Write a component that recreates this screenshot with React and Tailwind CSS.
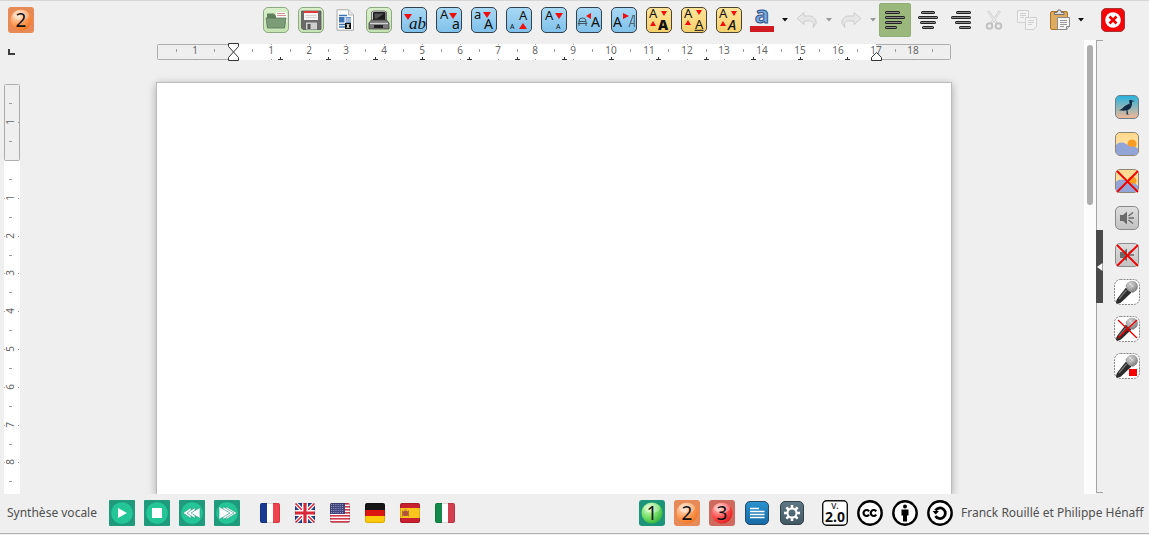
import { useId } from 'react'

const CM = 37.8
const sans = '"Noto Sans", sans-serif'
const serif = '"Liberation Serif", serif'

function IconButton({ label, className = 'size-[26px]', children }) {
  return (
    <button
      type="button"
      title={label}
      aria-label={label}
      className={`flex shrink-0 cursor-pointer items-center justify-center ${className}`}
    >
      {children}
    </button>
  )
}

function Svg({ size = 26, width, height, children }) {
  const w = width || size
  const h = height || size
  return (
    <svg width={w} height={h} viewBox={`0 0 ${w} ${h}`} aria-hidden="true" className="block shrink-0 overflow-visible">
      {children}
    </svg>
  )
}

/* ---------- numbered balls ---------- */

const ballColors = {
  1: { box: '#1b9479', light: '#d9ffc9', mid: '#6fdc62', dark: '#35b142' },
  2: { box: '#e88a58', light: '#ffe3cc', mid: '#ff9a55', dark: '#f0741f' },
  3: { box: '#cf6a5e', light: '#ffc9c9', mid: '#ff4a4a', dark: '#e02020' },
}

function Ball({ n }) {
  const id = useId()
  const c = ballColors[n]
  return (
    <Svg>
      <defs>
        <radialGradient id={id} cx="0.35" cy="0.3" r="0.75">
          <stop offset="0" stopColor={c.light} />
          <stop offset="0.6" stopColor={c.mid} />
          <stop offset="1" stopColor={c.dark} />
        </radialGradient>
      </defs>
      <rect width="26" height="26" rx="3" fill={c.box} />
      <circle cx="13" cy="13" r="10.5" fill={`url(#${id})`} />
      <ellipse cx="13" cy="8" rx="8" ry="5" fill="#fff" opacity="0.3" />
      <text x="13" y="20" textAnchor="middle" fontFamily={sans} fontSize="19" fill="#111">{n}</text>
    </Svg>
  )
}

/* ---------- top toolbar icons ---------- */

function Tile({ from, to, stroke, size = 26, children }) {
  const id = useId()
  return (
    <Svg size={size}>
      <defs>
        <linearGradient id={id} x1="0" y1="0" x2="0" y2="1">
          <stop offset="0" stopColor={from} />
          <stop offset="1" stopColor={to} />
        </linearGradient>
      </defs>
      <rect x="0.5" y="0.5" width={size - 1} height={size - 1} rx="4.5" fill={`url(#${id})`} stroke={stroke} />
      {children}
    </Svg>
  )
}

const Green = ({ children }) => <Tile from="#d9f0cb" to="#c5e3b3" stroke="#8fa884">{children}</Tile>
const Blue = ({ children }) => <Tile from="#a9d9f5" to="#7fc0ea" stroke="#33424c">{children}</Tile>
const Yellow = ({ children }) => <Tile from="#ffe49a" to="#f6d06c" stroke="#4a4433">{children}</Tile>

function Letter({ x, y, size = 13, family = sans, children, ...rest }) {
  return <text x={x} y={y} fontSize={size} fontFamily={family} fill="#111" {...rest}>{children}</text>
}

const Red = ({ points }) => <polygon points={points} fill="#f20d0d" />

function OpenIcon() {
  return (
    <Green>
      <path d="M4 6.5h7l1.5 2H22v11H4z" fill="#5f7f5c" />
      <path d="M13 5h9l2 2v8h-11z" fill="#fff" />
      <path d="M14 6.5h8M14 8.5h9" stroke="#c77a78" strokeWidth="0.8" />
      <path d="M3 11h20l-1.5 10h-17z" fill="#7d9d78" stroke="#567252" strokeWidth="0.8" />
    </Green>
  )
}

function SaveIcon() {
  return (
    <Green>
      <path d="M3.5 4h19.5v18.5H5L3.5 21z" fill="#6b6b6b" stroke="#555" strokeWidth="0.8" />
      <rect x="6" y="4" width="14" height="9" fill="#f4f4f4" />
      <rect x="6" y="4" width="14" height="2" fill="#e03c3c" />
      <path d="M7.5 8.5h11M7.5 10.5h11" stroke="#ccc" strokeWidth="0.8" />
      <rect x="8" y="15.5" width="11" height="7" fill="#cfcfcf" />
      <rect x="9.5" y="17" width="3" height="5" fill="#555" />
    </Green>
  )
}

function ExportIcon() {
  return (
    <Svg width={20} height={22}>
      <path d="M2 0.8h11.5L18.5 6v15.2H2z" fill="#fff" stroke="#a8a8a8" />
      <path d="M13.5 0.8V6h5" fill="#e8e8e8" stroke="#a8a8a8" strokeWidth="0.8" />
      <path d="M4 6.5h8M4 15.5h7M4 18h6" stroke="#3e73b5" strokeWidth="1.4" />
      <rect x="4" y="8" width="5.5" height="5.5" fill="#3e73b5" />
      <path d="M10.5 8.8H16M10.5 11H16M10.5 13.2H16" stroke="#3e73b5" strokeWidth="1.2" />
      <rect x="10" y="14" width="6" height="6" fill="#111" />
      <path d="M11.3 15.3h3.4l-1.3 1.7 1.3 1.7h-3.4l1.3-1.7z" fill="#fff" />
    </Svg>
  )
}

function PrintIcon() {
  return (
    <Green>
      <path d="M5.5 5l2-1h11l2 1v10h-15z" fill="#d8d8d8" stroke="#555" strokeWidth="0.8" />
      <rect x="7" y="5" width="12.5" height="9" rx="1" fill="#1d1d1d" />
      <path d="M8.500 6.500h9.500l-7 5h-2.500z" fill="#555" />
      <path d="M3 16l2.5-3h15l2.5 3v6H3z" fill="#7a7a7a" stroke="#444" strokeWidth="0.8" />
      <path d="M4 16.5h18" stroke="#d2d2d2" strokeWidth="1.3" />
      <rect x="8" y="18" width="9" height="3" fill="#222" />
    </Green>
  )
}

const styleButtons = [
  {
    label: 'Écriture cursive',
    icon: (
      <Blue>
        <Red points="3,7 11,7 7,13" />
        <Letter x="8" y="22" size="17" family={serif} fontStyle="italic">ab</Letter>
      </Blue>
    ),
  },
  {
    label: 'Minuscules',
    icon: (
      <Blue>
        <Letter x="4" y="12">A</Letter>
        <Red points="13,6 21,6 17,12" />
        <Letter x="16" y="22" size="14">a</Letter>
      </Blue>
    ),
  },
  {
    label: 'Majuscules',
    icon: (
      <Blue>
        <Letter x="3" y="12">a</Letter>
        <Red points="12,5 20,5 16,11" />
        <Letter x="13" y="22" size="14">A</Letter>
      </Blue>
    ),
  },
  {
    label: 'Agrandir',
    icon: (
      <Blue>
        <Letter x="13" y="13">A</Letter>
        <Letter x="4" y="22" size="7">A</Letter>
        <Red points="13,22 21,22 17,16" />
      </Blue>
    ),
  },
  {
    label: 'Réduire',
    icon: (
      <Blue>
        <Letter x="4" y="13">A</Letter>
        <Red points="14,6 22,6 18,12" />
        <Letter x="15" y="22" size="7">A</Letter>
      </Blue>
    ),
  },
  {
    label: 'Police suivante',
    icon: (
      <Blue>
        <path d="M3 19v-5q0-3 3.5-3t3.5 3v5M3 14.5h7M1.8 16.5h9.5" fill="none" stroke="#3d5563" />
        <Red points="10,9 15,6 15,12" />
        <Letter x="15" y="20" size="14">A</Letter>
      </Blue>
    ),
  },
  {
    label: 'Italique',
    icon: (
      <Blue>
        <Letter x="2" y="20" size="14">A</Letter>
        <Red points="18,9 12,6 12,12" />
        <path d="M18 20l4-11.5h1.3V20M19.2 16.5h4" fill="none" stroke="#4a6474" strokeWidth="1.1" />
      </Blue>
    ),
  },
  {
    label: 'Gras',
    icon: (
      <Yellow>
        <Letter x="3" y="11">A</Letter>
        <Red points="15,4 21,4 18,9" />
        <Red points="4,19 10,19 7,14" />
        <Letter x="12" y="23" size="14" fontWeight="900">A</Letter>
      </Yellow>
    ),
  },
  {
    label: 'Souligné',
    icon: (
      <Yellow>
        <Letter x="3" y="11">A</Letter>
        <Red points="15,3 21,3 18,8" />
        <Red points="4,18 10,18 7,13" />
        <Letter x="14" y="22">A</Letter>
        <path d="M13.5 23.3h9" stroke="#111" />
      </Yellow>
    ),
  },
  {
    label: 'Penché',
    icon: (
      <Yellow>
        <Letter x="3" y="11">A</Letter>
        <Red points="15,4 21,4 18,9" />
        <Red points="4,19 10,19 7,14" />
        <Letter x="12" y="23" size="14" fontStyle="italic" fontWeight="500">A</Letter>
      </Yellow>
    ),
  },
]

function FontColorIcon() {
  return (
    <Svg width={24} height={26}>
      <text
        x="12" y="16" textAnchor="middle" fontFamily={sans} fontSize="24" fontWeight="700"
        fill="#7ba9dc" stroke="#2d568c" strokeWidth="1"
      >a</text>
      <rect y="19" width="24" height="6" fill="#cf1b21" />
    </Svg>
  )
}

function Arrow({ color = '#111' }) {
  return (
    <Svg width={6} height={4}>
      <polygon points="0,0 6,0 3,3.6" fill={color} />
    </Svg>
  )
}

function UndoIcon({ flip }) {
  return (
    <Svg width={22} height={18}>
      <path
        transform={flip ? 'translate(22 0) scale(-1 1)' : undefined}
        d="M1 7.5L8 1.5V5h5c5 0 7.5 3.5 7 7.5l-3 4c1.5-4 0-6.5-4-6.5H8v3.5z"
        fill="#e6e6e6" stroke="#cdcdcd"
      />
    </Svg>
  )
}

const alignLines = {
  left: [[0, 15], [0, 20], [0, 17], [0, 12]],
  center: [[3, 17], [0, 20], [2, 18], [4, 16]],
  right: [[5, 20], [0, 20], [4, 20], [8, 20]],
}

function AlignIcon({ kind }) {
  return (
    <Svg width={20} height={20}>
      {alignLines[kind].map(([a, b], i) => (
        <g key={i}>
          <rect x={a} y={1 + i * 5} width={b - a} height="3" rx="1.5" fill="#222" />
          <rect x={a + 1} y={2 + i * 5} width={b - a - 2} height="1" fill="#8a8a8a" />
        </g>
      ))}
    </Svg>
  )
}

function CutIcon() {
  return (
    <Svg width={18} height={22}>
      <path d="M3 2l8.5 12M15 2L6.5 14" stroke="#d0d0d0" strokeWidth="2.4" />
      <path d="M3.2 2.5l8 11M14.8 2.5l-8 11" stroke="#f0f0f0" />
      <circle cx="4.5" cy="17" r="2.8" fill="none" stroke="#c2c2c2" strokeWidth="2" />
      <circle cx="13.5" cy="17" r="2.8" fill="none" stroke="#c2c2c2" strokeWidth="2" />
    </Svg>
  )
}

function CopyIcon() {
  return (
    <Svg width={20} height={20}>
      <path d="M0.5 0.5h11v12h-11z" fill="#f3f3f3" stroke="#cfcfcf" />
      <path d="M3 3.5h6M3 5.5h6M3 7.5h4" stroke="#d0d0d0" />
      <path d="M8.5 7.5h11v9l-3 3h-8z" fill="#f3f3f3" stroke="#cfcfcf" />
      <path d="M11 10.5h6M11 12.5h6M11 14.5h4" stroke="#d0d0d0" />
    </Svg>
  )
}

function PasteIcon() {
  return (
    <Svg width={22} height={22}>
      <rect x="1.5" y="2.5" width="17" height="18" rx="1.5" fill="#deaa5f" stroke="#a97528" />
      <path d="M5.5 5.5v-2H8L9 1h2.5l1 2.5H15v2z" fill="#ddd" stroke="#666" strokeWidth="0.9" />
      <path d="M8.5 8.5h12v9l-3 3h-9z" fill="#f6f6f6" stroke="#8a8a8a" />
      <path d="M11 11.5h7M11 13.5h7M11 15.5h7M11 17.5h4" stroke="#999" />
      <path d="M17.5 20.5v-3h3" fill="#ddd" stroke="#8a8a8a" />
    </Svg>
  )
}

function CloseIcon() {
  return (
    <Svg size={24}>
      <rect x="0.5" y="0.5" width="23" height="23" rx="4.5" fill="#f50505" stroke="#a33" />
      <circle cx="12" cy="12" r="7.8" fill="#fff" />
      <path d="M8.5 8.5l7 7M15.5 8.5l-7 7" stroke="#e00" strokeWidth="2.6" />
    </Svg>
  )
}

function Toolbar() {
  return (
    <header className="flex h-10 shrink-0 items-center border-t border-[#d6d6d6] pr-6 pb-[2px] pl-2">
      <IconButton label="Niveau 2"><Ball n={2} /></IconButton>
      <div className="ml-auto flex items-center" role="toolbar" aria-label="Mise en forme">
        <div className="mr-2 flex items-center gap-[9px]">
          <IconButton label="Ouvrir"><OpenIcon /></IconButton>
          <IconButton label="Enregistrer"><SaveIcon /></IconButton>
          <IconButton label="Exporter" className="h-[26px] w-6"><ExportIcon /></IconButton>
          <IconButton label="Imprimer"><PrintIcon /></IconButton>
          {styleButtons.map((b) => (
            <IconButton key={b.label} label={b.label}>{b.icon}</IconButton>
          ))}
        </div>
        <div className="mr-[3px] flex items-center gap-2">
          <IconButton label="Couleur de police" className="h-[26px] w-6"><FontColorIcon /></IconButton>
          <IconButton label="Choisir une couleur" className="h-[26px] w-[6px]"><Arrow /></IconButton>
          <IconButton label="Annuler" className="h-[26px] w-[22px]"><UndoIcon /></IconButton>
          <IconButton label="Liste des annulations" className="h-[26px] w-[6px]"><Arrow color="#9a9a9a" /></IconButton>
          <IconButton label="Rétablir" className="h-[26px] w-[22px]"><UndoIcon flip /></IconButton>
          <IconButton label="Liste des rétablissements" className="h-[26px] w-[6px]"><Arrow color="#9a9a9a" /></IconButton>
        </div>
        <div className="flex items-center gap-px">
          <IconButton label="Aligner à gauche" className="h-[34px] w-8 rounded-xs border border-[#93ae74] bg-[#9ab87c]">
            <AlignIcon kind="left" />
          </IconButton>
          <IconButton label="Centrer" className="h-[34px] w-8"><AlignIcon kind="center" /></IconButton>
          <IconButton label="Aligner à droite" className="h-[34px] w-8"><AlignIcon kind="right" /></IconButton>
          <IconButton label="Couper" className="h-[34px] w-8"><CutIcon /></IconButton>
          <IconButton label="Copier" className="h-[34px] w-8"><CopyIcon /></IconButton>
          <IconButton label="Coller" className="h-[34px] w-8"><PasteIcon /></IconButton>
          <IconButton label="Collage spécial" className="h-[34px] w-2"><Arrow /></IconButton>
        </div>
      </div>
      <IconButton label="Fermer" className="ml-4 size-6"><CloseIcon /></IconButton>
    </header>
  )
}

/* ---------- rulers ---------- */

function HorizontalRuler() {
  const zero = 77
  const end = 720
  const numbers = [-1, ...Array.from({ length: 18 }, (_, i) => i + 1)]
  const halves = Array.from({ length: 21 }, (_, i) => i - 1.5)
  const tabs = Array.from({ length: 13 }, (_, i) => Math.round(zero + (i + 1) * 1.25 * CM))
  return (
    <svg width="796" height="20" viewBox="0 0 796 20" className="block shrink-0" role="img" aria-label="Règle horizontale">
      <rect x="1.5" y="2.5" width="793" height="15" rx="1" fill="#efefef" stroke="#adadad" />
      <rect x={zero} y="2" width={end - zero} height="16" fill="#fff" />
      {halves.map((h) => (
        <rect key={h} x={Math.round(zero + h * CM)} y="7" width="1" height="3" fill="#9a9a9a" />
      ))}
      {numbers.map((n) => {
        const x = Math.round(zero + n * CM)
        return (
          <g key={n}>
            <rect x={x} y="2" width="1" height="1" fill="#aaa" />
            <rect x={x} y="17" width="1" height="1" fill="#999" />
            <text x={x} y="12" textAnchor="middle" fontFamily={sans} fontSize="10" fill="#666">{Math.abs(n)}</text>
          </g>
        )
      })}
      {tabs.map((x) => (
        <path key={x} d={`M${x - 2} 17.5h5M${x + 0.5} 15v3`} stroke="#333" fill="none" />
      ))}
      <path d="M72.5 1.5h10v3l-5 5.5-5-5.5zM72.5 18.500h10v-3l-5-5.500-5 5.500z" fill="#fff" stroke="#333" />
      <path d="M715.5 18.5h10v-3l-5-5-5 5z" fill="#fff" stroke="#333" />
    </svg>
  )
}

function VerticalRuler() {
  const zero = 76
  const numbers = [-1, ...Array.from({ length: 26 }, (_, i) => i + 1)]
  const halves = Array.from({ length: 28 }, (_, i) => i - 1.5)
  return (
    <svg width="16" height="1100" viewBox="0 0 16 1100" className="block shrink-0" role="img" aria-label="Règle verticale">
      <rect y={zero} width="16" height="1000" fill="#fff" />
      <rect x="0.5" y="0.5" width="15" height="76" rx="1" fill="#efefef" stroke="#adadad" />
      {halves.map((h) => (
        <rect key={h} x="5" y={Math.round(zero + h * CM)} width="3" height="1" fill="#9a9a9a" />
      ))}
      {numbers.map((n) => {
        const y = Math.round(zero + n * CM)
        return (
          <g key={n}>
            <rect x="0" y={y} width="1" height="1" fill="#aaa" />
            <rect x="14" y={y} width="1" height="1" fill="#999" />
            <text
              transform={`translate(10 ${y}) rotate(-90)`}
              textAnchor="middle" fontFamily={sans} fontSize="10" fill="#666"
            >{Math.abs(n)}</text>
          </g>
        )
      })}
    </svg>
  )
}

function Document() {
  return (
    <main className="flex min-w-0 flex-1 overflow-hidden">
      <div className="flex w-6 shrink-0 flex-col pl-1">
        <div className="flex h-11 shrink-0 items-start pt-[9px] pl-1">
          <button type="button" aria-label="Tabulation à gauche" className="h-[6px] w-[7px] border-b-2 border-l-2 border-[#3c3c3c]" />
        </div>
        <VerticalRuler />
      </div>
      <div className="flex min-w-0 flex-1 flex-col items-center pt-[2px]">
        <HorizontalRuler />
        <div className="flex w-full flex-1 justify-center overflow-hidden pt-5">
          <div
            role="textbox"
            aria-multiline="true"
            aria-label="Document"
            className="w-[796px] border border-b-0 border-[#bcbcbc] bg-white shadow-[0_2px_8px_rgba(0,0,0,0.3)]"
          />
        </div>
      </div>
      <div className="w-3 shrink-0 bg-[#fcfcfc] px-[3px] pt-[5px]">
        <div className="h-40 rounded-full bg-[#adadad]" />
      </div>
    </main>
  )
}

/* ---------- right side panel ---------- */

function Bird() {
  return (
    <Tile size={24} from="#23b3e0" to="#f5b896" stroke="#6d7f86">
      <path
        d="M14 5.5q2-1.500 3 0l3 0.400-3 0.800q0.500 4-1.500 6.500-1.500 1.500-3 1.800L13 19l1.500 0.500h-3V15.300Q9 16 4 15.200q3-1 5.500-4Q12 9.500 14.500 8.800q0-1.800-0.500-3.300z"
        fill="#122a44"
      />
    </Tile>
  )
}

function Sky({ children }) {
  return (
    <Tile size={24} from="#ffd98c" to="#ffe7b5" stroke="#8f8574">
      <circle cx="17" cy="12" r="4.5" fill="#fb9c22" />
      <path d="M1 13c3-4 10-3 14 2 4-1 7 0 8 2v3q0 3-3 3H4q-3 0-3-3z" fill="#93a5d6" />
      {children}
    </Tile>
  )
}

const Cross = () => <path d="M2 2l21 21M23 2L2 23" stroke="#f00000" strokeWidth="1.8" />

function Speaker({ children }) {
  return (
    <Tile size={24} from="#dedede" to="#c2c2c2" stroke="#8b8b8b">
      <path d="M5 9h3l4-3.5v13L8 15H5z" fill="#6a6a6a" />
      <path d="M13.5 12H19M13.5 10L18 6.5M13.5 14l4.5 3.5" stroke="#6a6a6a" strokeWidth="1.5" />
      {children}
    </Tile>
  )
}

function Mic({ children }) {
  const id = useId()
  return (
    <Svg>
      <defs>
        <radialGradient id={id} cx="0.4" cy="0.35" r="0.7">
          <stop offset="0" stopColor="#eee" />
          <stop offset="1" stopColor="#707070" />
        </radialGradient>
      </defs>
      <rect x="0.5" y="0.5" width="25" height="25" rx="6" fill="#fff" stroke="#858585" strokeDasharray="2 1" />
      <path d="M12 8.5l5.5 5L7 23.5Q4 25.500 2 24q0-2 1-4z" fill="#2c2c2c" />
      <path d="M12.5 11L5 20" stroke="#777" strokeWidth="1.2" />
      <path d="M11.5 7l7.5 7 1.5-1.5-7.500-8z" fill="#8a8a8a" />
      <circle cx="18" cy="7.5" r="5.8" fill={`url(#${id})`} />
      <path d="M14 5l7 7M16 2.5l7 7M13.5 9l8-7M16 12.5l7.500-7" stroke="#999" strokeWidth="0.5" />
      {children}
    </Svg>
  )
}

const panelButtons = [
  { label: 'Oiseau', icon: <Bird /> },
  { label: 'Image', icon: <Sky /> },
  { label: "Supprimer l'image", icon: <Sky><Cross /></Sky> },
  { label: 'Son', icon: <Speaker /> },
  { label: 'Supprimer le son', icon: <Speaker><Cross /></Speaker> },
  { label: 'Enregistrer la voix', icon: <Mic /> },
  { label: 'Supprimer la voix', icon: <Mic><path d="M4 4l19 18M23 4L4 22" stroke="#f00000" strokeWidth="1.3" /></Mic> },
  { label: "Arrêter l'enregistrement", icon: <Mic><rect x="15" y="16" width="8" height="7" fill="#f80000" /></Mic> },
]

function SidePanel() {
  return (
    <aside className="flex shrink-0">
      <div className="mb-px flex w-[7px] flex-col justify-center border-y border-l border-[#a5a5a5]">
        <button
          type="button"
          aria-label="Masquer le panneau"
          className="-ml-px flex h-[73px] items-center justify-end bg-[#4a4a4a]"
        >
          <Svg width={6} height={8}><polygon points="0,4 5.5,0 5.5,8" fill="#fff" /></Svg>
        </button>
      </div>
      <div className="flex w-[46px] flex-col items-center gap-[11px] pt-[54px] pl-[2px]">
        {panelButtons.map((b) => (
          <IconButton key={b.label} label={b.label}>{b.icon}</IconButton>
        ))}
      </div>
    </aside>
  )
}

/* ---------- bottom bar ---------- */

function Player({ children }) {
  return (
    <Svg>
      <rect width="26" height="26" rx="1" fill="#1f9a7c" />
      <circle cx="13" cy="13" r="10.8" fill="#24c596" />
      {children}
    </Svg>
  )
}

const playerButtons = [
  { label: 'Lire', icon: <Player><polygon points="9,8 18,13 9,18" fill="#fff" /></Player> },
  { label: 'Arrêter', icon: <Player><rect x="8" y="8" width="10" height="10" fill="#fff" /></Player> },
  {
    label: 'Ralentir',
    icon: (
      <Player>
        <g fill="#fff" stroke="#1f9a7c" strokeWidth="0.6">
          <polygon points="4,13 12,7.5 12,18.5" />
          <polygon points="8,13 16,7.5 16,18.5" />
          <polygon points="12,13 21,7.5 21,18.5" />
        </g>
      </Player>
    ),
  },
  {
    label: 'Accélérer',
    icon: (
      <Player>
        <g fill="#fff" stroke="#1f9a7c" strokeWidth="0.6">
          <polygon points="23,13 12,6.5 12,19.5" />
          <polygon points="20,13 9,6.5 9,19.5" />
          <polygon points="16,13 5,6.5 5,19.5" />
        </g>
      </Player>
    ),
  },
]

function Flag({ children }) {
  const id = useId()
  return (
    <Svg size={20}>
      <defs>
        <clipPath id={id}><rect width="20" height="20" rx="2" /></clipPath>
      </defs>
      <g clipPath={`url(#${id})`}>
        {children}
        <rect x="0.5" y="0.5" width="19" height="19" rx="2" fill="none" stroke="#000" opacity="0.15" />
      </g>
    </Svg>
  )
}

function Stripes({ colors, vertical }) {
  let pos = 0
  return colors.map(([color, size], i) => {
    const at = pos
    pos += size
    return vertical
      ? <rect key={i} x={at} width={size} height="20" fill={color} />
      : <rect key={i} y={at} width="20" height={size} fill={color} />
  })
}

const flags = [
  { label: 'Français', art: <Stripes vertical colors={[['#1b3a94', 7], ['#fff', 6], ['#f0424f', 7]]} /> },
  {
    label: 'Anglais',
    art: (
      <>
        <rect width="20" height="20" fill="#26408b" />
        <path d="M0 0l20 20M20 0L0 20" stroke="#fff" strokeWidth="4" />
        <path d="M0 0l20 20M20 0L0 20" stroke="#d8293b" strokeWidth="1.5" />
        <path d="M10 0v20M0 10h20" stroke="#fff" strokeWidth="6" />
        <path d="M10 0v20M0 10h20" stroke="#d8293b" strokeWidth="3.2" />
      </>
    ),
  },
  {
    label: 'Américain',
    art: (
      <>
        <rect width="20" height="20" fill="#fff" />
        {[0, 3, 6, 9, 12, 15, 18].map((y) => <rect key={y} y={y} width="20" height="1.6" fill="#d03a4c" />)}
        <rect width="15" height="11" fill="#41457e" />
        {[1.5, 3.5, 5.5, 7.5, 9.5].map((y) => (
          <path key={y} d={`M1 ${y}h13`} stroke="#a5a8cc" strokeWidth="0.9" strokeDasharray="1 1.2" />
        ))}
      </>
    ),
  },
  { label: 'Allemand', art: <Stripes colors={[['#151515', 7], ['#dd1510', 6], ['#fdc90c', 7]]} /> },
  {
    label: 'Espagnol',
    art: (
      <>
        <Stripes colors={[['#c8202f', 5], ['#fcc51e', 10], ['#c8202f', 5]]} />
        <rect x="3" y="8" width="5" height="5" rx="1" fill="#b5533a" />
        <path d="M2.5 7.5v6M8.5 7.5v6M4 7h3" stroke="#a8793c" />
      </>
    ),
  },
  { label: 'Italien', art: <Stripes vertical colors={[['#138a4b', 7], ['#fff', 6], ['#d2404f', 7]]} /> },
]

function TextIcon() {
  return (
    <Tile size={24} from="#2a93cf" to="#1769a6" stroke="#274b66">
      <path d="M5 7.5h9M5 10.5h14.500M5 13.5h14.500M5 16.5h14.500" stroke="#fff" strokeWidth="1.6" />
    </Tile>
  )
}

function GearIcon() {
  return (
    <Tile size={24} from="#5f7883" to="#435a65" stroke="#33434b">
      <g stroke="#fff" fill="none">
        <circle cx="12" cy="12" r="4.5" strokeWidth="2" />
        {[0, 45, 90, 135, 180, 225, 270, 315].map((a) => (
          <path key={a} d="M12 7V4" strokeWidth="2.6" transform={`rotate(${a} 12 12)`} />
        ))}
      </g>
    </Tile>
  )
}

function VersionIcon() {
  return (
    <Svg>
      <rect x="0.7" y="0.7" width="24.6" height="24.6" rx="4" fill="#fff" stroke="#111" strokeWidth="1.4" />
      <text x="13" y="9" textAnchor="middle" fontFamily={sans} fontSize="10" fill="#111">v.</text>
      <text x="13" y="22" textAnchor="middle" fontFamily={sans} fontSize="14" fontWeight="700" fill="#111">2.0</text>
    </Svg>
  )
}

function Licence({ children }) {
  return (
    <Svg>
      <circle cx="13" cy="13" r="11.7" fill="#fff" stroke="#000" strokeWidth="2.4" />
      {children}
    </Svg>
  )
}

const licences = [
  {
    label: 'Creative Commons',
    art: (
      <g fill="none" stroke="#000" strokeWidth="2.2">
        <path d="M12 11.3a3 3 0 1 0 0 3.4" />
        <path d="M19.2 11.3a3 3 0 1 0 0 3.4" />
      </g>
    ),
  },
  {
    label: 'Attribution',
    art: (
      <>
        <circle cx="13" cy="6.5" r="2" />
        <path d="M9.5 9.5h7v6H15v6h-4v-6H9.500z" />
      </>
    ),
  },
  {
    label: 'Partage dans les mêmes conditions',
    art: (
      <>
        <path d="M8.5 10.5a5.300 5.300 0 1 1 0 5.500" fill="none" stroke="#000" strokeWidth="2.8" />
        <polygon points="5.5,11 12,11 8.7,14.5" />
      </>
    ),
  },
]

function BottomBar() {
  return (
    <footer className="shrink-0 pb-px">
      <div className="flex h-10 items-center border-b border-[#b0b0b0] pr-2 pb-[2px] pl-[7px] text-[12px] text-[#505050]">
        <span className="w-[102px] whitespace-nowrap">Synthèse vocale</span>
        <div className="flex items-center gap-[9px]">
          {playerButtons.map((b) => (
            <IconButton key={b.label} label={b.label}>{b.icon}</IconButton>
          ))}
        </div>
        <div className="ml-5 flex items-center gap-[15px]">
          {flags.map((f) => (
            <IconButton key={f.label} label={f.label} className="size-5"><Flag>{f.art}</Flag></IconButton>
          ))}
        </div>
        <div className="ml-auto flex items-center gap-[9px]">
          <IconButton label="Niveau 1"><Ball n={1} /></IconButton>
          <IconButton label="Niveau 2"><Ball n={2} /></IconButton>
          <IconButton label="Niveau 3"><Ball n={3} /></IconButton>
          <IconButton label="Texte"><TextIcon /></IconButton>
          <IconButton label="Réglages"><GearIcon /></IconButton>
        </div>
        <div className="ml-[17px] flex items-center gap-[9px]">
          <IconButton label="Version"><VersionIcon /></IconButton>
          {licences.map((l) => (
            <IconButton key={l.label} label={l.label}><Licence>{l.art}</Licence></IconButton>
          ))}
        </div>
        <span className="ml-2 w-[180px] whitespace-nowrap">Franck Rouillé et Philippe Hénaff</span>
      </div>
    </footer>
  )
}

export default function App() {
  return (
    <div className="flex h-screen flex-col overflow-hidden bg-[#efefef] font-['Noto_Sans',sans-serif]">
      <Toolbar />
      <div className="flex min-h-0 flex-1">
        <Document />
        <SidePanel />
      </div>
      <BottomBar />
    </div>
  )
}
